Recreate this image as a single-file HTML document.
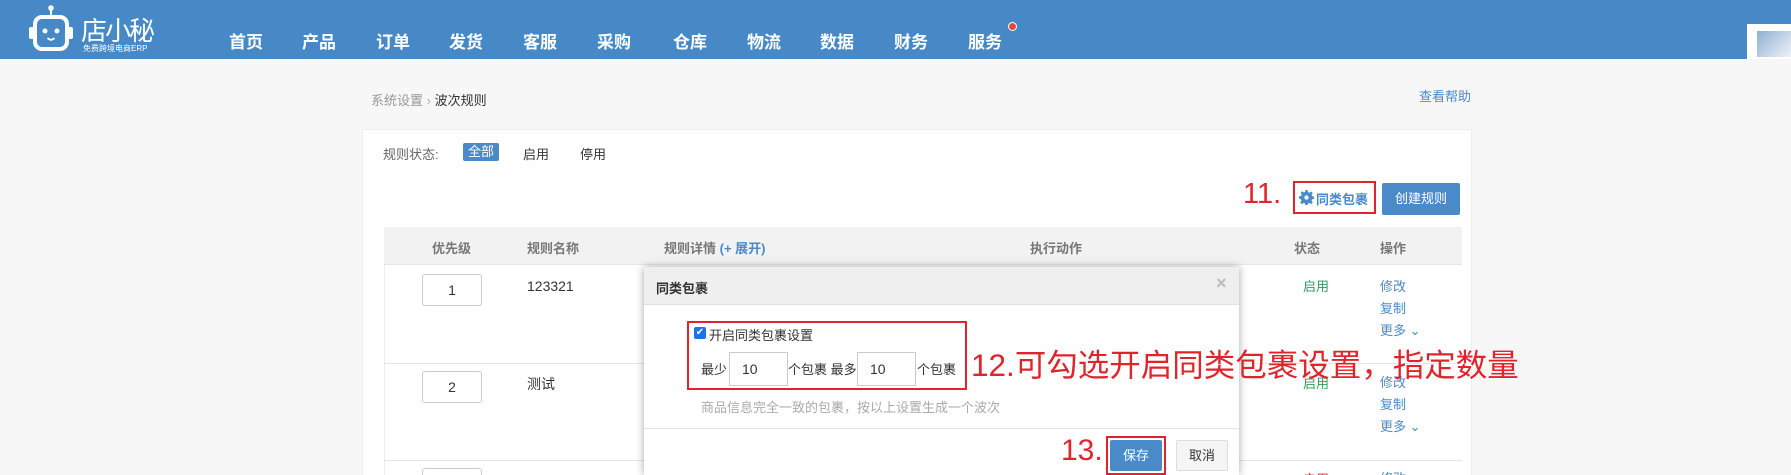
<!DOCTYPE html>
<html style="height:475px;overflow:hidden"><head><meta charset="utf-8"><style>
*{margin:0;padding:0;box-sizing:border-box}
body{width:1791px;height:475px;overflow:hidden;background:#f7f7f7;font-family:"Liberation Sans","Noto Sans CJK SC",sans-serif;position:relative;font-size:13px;color:#333}
.a{position:absolute;white-space:nowrap}
.hdr{position:absolute;left:0;top:0;width:1791px;height:59px;background:#4689c6}
.nav{color:#fff;font-weight:bold;font-size:17px;top:28px}
.blue{color:#4a8ac8}
.red{color:#e0242b}
.rbox{position:absolute;border:2px solid #e0242b}
.inp{position:absolute;border:1px solid #ccc;background:#fff;border-radius:3px;font-size:14px;text-align:center}
.th{color:#777;font-weight:bold;font-size:13px;top:238px}
</style></head><body>
<div class="hdr"></div>
<svg class="a" style="left:27px;top:3px" width="48" height="50" viewBox="0 0 48 50">
<circle cx="24" cy="5" r="2.8" fill="#fff"/><rect x="23" y="6" width="2" height="8" fill="#fff"/>
<rect x="8" y="14" width="32" height="32" rx="7" fill="none" stroke="#fff" stroke-width="4"/>
<rect x="2" y="24" width="5" height="12" rx="2" fill="#fff"/><rect x="41" y="24" width="5" height="12" rx="2" fill="#fff"/>
<circle cx="18" cy="28" r="2.5" fill="#fff"/><circle cx="30" cy="28" r="2.5" fill="#fff"/>
<path d="M20.5 35 q3.5 3.5 7 0" stroke="#fff" stroke-width="1.8" fill="none"/></svg>
<div class="a" style="left:81px;top:11px;color:#fff;font-size:26px;letter-spacing:-2px">店小秘</div>
<div class="a" style="left:83px;top:43px;color:#fff;font-size:8px">免费跨境电商ERP</div>
<div class="a nav" style="left:229px">首页</div>
<div class="a nav" style="left:302px">产品</div>
<div class="a nav" style="left:376px">订单</div>
<div class="a nav" style="left:449px">发货</div>
<div class="a nav" style="left:523px">客服</div>
<div class="a nav" style="left:597px">采购</div>
<div class="a nav" style="left:673px">仓库</div>
<div class="a nav" style="left:747px">物流</div>
<div class="a nav" style="left:820px">数据</div>
<div class="a nav" style="left:894px">财务</div>
<div class="a nav" style="left:968px">服务</div>
<div class="a" style="left:1008px;top:22px;width:9px;height:9px;border-radius:50%;background:#e8453c;border:1px solid #fff"></div>
<div class="a" style="left:1747px;top:24px;width:44px;height:35px;background:#fff"></div>
<div class="a" style="left:1757px;top:31px;width:34px;height:26px;background:linear-gradient(135deg,#8fb0d4,#eef2f6)"></div>

<div class="a" style="left:371px;top:90px;color:#999;font-size:13px">系统设置 <span style="color:#aaa">›</span> <span style="color:#333">波次规则</span></div>
<div class="a blue" style="left:1419px;top:86px;font-size:13px">查看帮助</div>

<div class="a" style="left:362px;top:129px;width:1110px;height:346px;background:#fff;border:1px solid #eee;border-bottom:none"></div>
<div class="a" style="left:383px;top:144px;color:#666">规则状态:</div>
<div class="a" style="left:463px;top:143px;width:36px;height:18px;background:#4a8ac8;border-radius:2px;color:#fff;text-align:center;line-height:18px">全部</div>
<div class="a" style="left:523px;top:144px">启用</div>
<div class="a" style="left:580px;top:144px">停用</div>

<div class="a red" style="left:1243px;top:178px;font-size:29px">11.</div>
<div class="rbox" style="left:1293px;top:181px;width:83px;height:33px"></div>
<svg class="a" style="left:1299px;top:190px" width="15" height="15" viewBox="0 0 16 16"><path fill="#4a8ac8" d="M6.8 0h2.4l.4 2.2 1.5.7 1.9-1.3 1.7 1.7-1.3 1.9.7 1.5 2.2.4v2.4l-2.2.4-.7 1.5 1.3 1.9-1.7 1.7-1.9-1.3-1.5.7-.4 2.2H6.8l-.4-2.2-1.5-.7-1.9 1.3-1.7-1.7 1.3-1.9-.7-1.5L0 9.2V6.8l2.2-.4.7-1.5L1.6 3l1.7-1.7 1.9 1.3 1.5-.7z"/><circle cx="8" cy="8" r="2.3" fill="#fff"/></svg>
<div class="a blue" style="left:1316px;top:189px;font-size:13px;font-weight:bold">同类包裹</div>
<div class="a" style="left:1382px;top:183px;width:78px;height:32px;background:#4a8ac8;border-radius:2px;color:#fff;text-align:center;line-height:32px;font-size:13px">创建规则</div>

<div class="a" style="left:384px;top:227px;width:1078px;height:38px;background:#f2f2f2;border-bottom:1px solid #e6e6e6"></div>
<div class="a th" style="left:432px">优先级</div>
<div class="a th" style="left:527px">规则名称</div>
<div class="a th" style="left:664px">规则详情 <span class="blue">(+ 展开)</span></div>
<div class="a th" style="left:1030px">执行动作</div>
<div class="a th" style="left:1294px">状态</div>
<div class="a th" style="left:1380px">操作</div>
<div class="a" style="left:384px;top:265px;width:1px;height:210px;background:#eee"></div>
<div class="a" style="left:384px;top:363px;width:1078px;height:1px;background:#e6e6e6"></div>
<div class="a" style="left:384px;top:460px;width:1078px;height:1px;background:#e6e6e6"></div>
<div class="inp" style="left:422px;top:274px;width:60px;height:32px;line-height:30px">1</div>
<div class="inp" style="left:422px;top:371px;width:60px;height:32px;line-height:30px">2</div>
<div class="inp" style="left:422px;top:468px;width:60px;height:7px;border-bottom:none;border-radius:3px 3px 0 0"></div>
<div class="a" style="left:527px;top:278px;font-size:14px">123321</div>
<div class="a" style="left:527px;top:374px;font-size:14px">测试</div>
<div class="a" style="left:1303px;top:276px;color:#2aa05a">启用</div>
<div class="a" style="left:1303px;top:373px;color:#2aa05a">启用</div>
<div class="a" style="left:1303px;top:469px;color:#e0242b">启用</div>
<div class="a blue" style="left:1380px;top:276px;line-height:22px">修改<br>复制<br>更多 ⌄</div>
<div class="a blue" style="left:1380px;top:372px;line-height:22px">修改<br>复制<br>更多 ⌄</div>
<div class="a blue" style="left:1380px;top:468px">修改</div>

<div class="a" style="left:644px;top:267px;width:595px;height:208px;background:#fff;box-shadow:0 0 8px rgba(0,0,0,.35)"></div>
<div class="a" style="left:644px;top:267px;width:595px;height:38px;background:#efefef;border-bottom:1px solid #e0e0e0"></div>
<div class="a" style="left:656px;top:278px;font-weight:bold;font-size:13px">同类包裹</div>
<div class="a" style="left:1216px;top:273px;color:#bbb;font-size:18px;font-weight:bold">×</div>
<div class="rbox" style="left:687px;top:321px;width:280px;height:69px"></div>
<div class="a" style="left:694px;top:327px;width:12px;height:12px;background:#1a73e8;border-radius:2px;color:#fff;font-size:10px;line-height:12px;text-align:center">✔</div>
<div class="a" style="left:709px;top:325px">开启同类包裹设置</div>
<div class="a" style="left:701px;top:359px">最少</div>
<div class="inp" style="left:729px;top:352px;width:59px;height:34px;line-height:32px;text-align:left;padding-left:12px;border-radius:0">10</div>
<div class="a" style="left:788px;top:359px">个包裹 最多</div>
<div class="inp" style="left:857px;top:352px;width:59px;height:34px;line-height:32px;text-align:left;padding-left:12px;border-radius:0">10</div>
<div class="a" style="left:917px;top:359px">个包裹</div>
<div class="a" style="left:701px;top:397px;color:#aaa">商品信息完全一致的包裹，按以上设置生成一个波次</div>
<div class="a" style="left:644px;top:428px;width:595px;height:1px;background:#e6e6e6"></div>
<div class="a red" style="left:971px;top:340px;font-size:31.5px">12.可勾选开启同类包裹设置，指定数量</div>
<div class="a red" style="left:1061px;top:434px;font-size:30px">13.</div>
<div class="rbox" style="left:1106px;top:436px;width:60px;height:39px"></div>
<div class="a" style="left:1110px;top:440px;width:52px;height:31px;background:#4a8ac8;border-radius:2px;color:#fff;text-align:center;line-height:31px">保存</div>
<div class="a" style="left:1176px;top:440px;width:52px;height:31px;background:#f5f5f5;border:1px solid #ddd;border-radius:2px;text-align:center;line-height:29px">取消</div>
</body></html>
